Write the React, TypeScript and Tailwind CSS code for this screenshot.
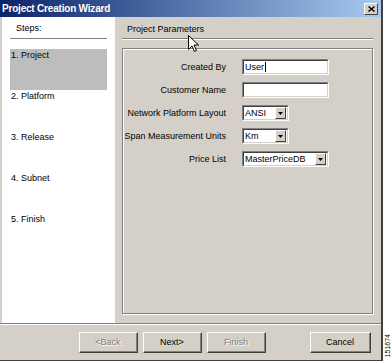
import React from "react";

const font = { fontFamily: '"Liberation Sans", Arial, sans-serif' };

function Field({ value, width, caret }: { value: string; width: string; caret?: boolean }) {
  return (
    <div
      className={`${width} h-[16px] bg-white border-t border-l border-t-[#808080] border-l-[#808080] border-b border-r border-b-white border-r-white`}
    >
      <div className="h-full border-t border-l border-t-[#404040] border-l-[#404040] border-b border-r border-b-[#d4d0c8] border-r-[#d4d0c8] flex items-center pl-[1px] text-[9px] text-black leading-none">
        {value}
        {caret && <span className="ml-[1px] w-px h-[10px] bg-black" />}
      </div>
    </div>
  );
}

function Select({ value, width }: { value: string; width: string }) {
  return (
    <div
      className={`${width} h-[16px] bg-white border-t border-l border-t-[#808080] border-l-[#808080] border-b border-r border-b-white border-r-white`}
    >
      <div className="h-full border-t border-l border-t-[#404040] border-l-[#404040] border-b border-r border-b-[#d4d0c8] border-r-[#d4d0c8] flex items-center pl-[1px] text-[9px] text-black leading-none">
        <span className="flex-1">{value}</span>
        <div className="w-[11px] h-[12px] mr-[1px] bg-[#d4d0c8] border-t border-l border-t-white border-l-white border-b border-r border-b-[#404040] border-r-[#404040] flex items-center justify-center">
          <svg width="5" height="3" viewBox="0 0 5 3">
            <path d="M0 0h5L2.5 3z" fill="#000" />
          </svg>
        </div>
      </div>
    </div>
  );
}

function Btn({ label, disabled, className = "" }: { label: string; disabled?: boolean; className?: string }) {
  return (
    <div
      className={`w-[59px] h-[21px] bg-[#d4d0c8] border-t border-l border-t-white border-l-white border-b border-r border-b-[#404040] border-r-[#404040] ${className}`}
    >
      <div className="h-full border-b border-r border-b-[#808080] border-r-[#808080] flex items-center justify-center text-[9px] leading-none">
        {disabled ? (
          <span className="text-[#808080] [text-shadow:1px_1px_0_#fff]">{label}</span>
        ) : (
          <span className="text-black">{label}</span>
        )}
      </div>
    </div>
  );
}

function Etched({ className = "" }: { className?: string }) {
  return <div className={`h-[2px] border-t border-t-[#808080] border-b border-b-white ${className}`} />;
}

export default function App() {
  const steps = ["1. Project", "2. Platform", "3. Release", "4. Subnet", "5. Finish"];
  const rows: { label: string; el: React.ReactNode }[] = [
    { label: "Created By", el: <Field value="User" width="w-[87px]" caret /> },
    { label: "Customer Name", el: <Field value="" width="w-[87px]" /> },
    { label: "Network Platform Layout", el: <Select value="ANSI" width="w-[47px]" /> },
    { label: "Span Measurement Units", el: <Select value="Km" width="w-[47px]" /> },
    { label: "Price List", el: <Select value="MasterPriceDB" width="w-[87px]" /> },
  ];

  return (
    <div className="w-[392px] h-[363px] bg-white flex relative overflow-hidden" style={font}>
      {/* Fenster */}
      <div className="w-[383px] h-[361px] bg-[#d4d0c8] flex flex-col border-r-2 border-b border-r-[#404040] border-b-[#404040]">
        {/* Titelleiste */}
        <div className="h-[17px] flex items-center pl-[2px] pr-[3px] bg-[linear-gradient(to_right,#0a246a,#a6caf0)]">
          <span className="flex-1 text-white font-bold text-[10px] tracking-[-0.2px] leading-none">
            Project Creation Wizard
          </span>
          <div className="w-[14px] h-[12px] bg-[#d4d0c8] border-t border-l border-t-white border-l-white border-b border-r border-b-[#404040] border-r-[#404040] flex items-center justify-center">
            <svg width="7" height="6" viewBox="0 0 7 6">
              <path d="M0.5 0.5l6 5M6.5 0.5l-6 5" stroke="#000" strokeWidth="1.4" />
            </svg>
          </div>
        </div>

        {/* Inhalt */}
        <div className="flex h-[306px]">
          {/* Schritte */}
          <div className="w-[113px] ml-[2px] bg-white flex flex-col">
            <div className="pt-[5px] pl-[14px] h-[18px] text-[9px] text-black leading-[13px]">Steps:</div>
            <Etched className="mx-[8px] mt-[3px]" />
            <div className="flex flex-col mt-[9px] mx-[8px]">
              {steps.map((s, i) => (
                <div
                  key={s}
                  className={`h-[41px] text-[9px] text-black leading-[13px] pl-[1px] ${i === 0 ? "bg-[#bdbdbd]" : ""}`}
                >
                  {s}
                </div>
              ))}
            </div>
          </div>

          {/* Parameter */}
          <div className="flex-1 flex flex-col pl-[7px] pr-[8px]">
            <div className="pt-[6px] pl-[5px] h-[19px] text-[9px] text-black leading-[13px]">Project Parameters</div>
            <Etched className="mt-[2px]" />
            <div className="mt-[8px] h-[266px] border border-[#808080] shadow-[inset_1px_1px_0_#fff,1px_1px_0_#fff] pt-[10px] flex flex-col gap-[7px]">
              {rows.map((r) => (
                <div key={r.label} className="flex items-center h-[16px]">
                  <div className="w-[103px] text-right text-[9px] text-black leading-none whitespace-nowrap">{r.label}</div>
                  <div className="ml-[16px]">{r.el}</div>
                </div>
              ))}
            </div>
          </div>
        </div>

        {/* Knopfleiste */}
        <Etched />
        <div className="flex-1 flex items-start pt-[7px] pl-[79px]">
          <Btn label="<Back" disabled />
          <Btn label="Next>" className="ml-[5px]" />
          <Btn label="Finish" disabled className="ml-[5px]" />
          <Btn label="Cancel" className="ml-[44px] w-[61px]" />
        </div>
      </div>

      {/* Bildnummer */}
      <div className="flex-1 flex items-end justify-center pb-[6px]">
        <span className="[writing-mode:vertical-rl] rotate-180 text-[7px] text-black leading-none">151674</span>
      </div>

      {/* Mauszeiger */}
      <svg className="absolute left-[188px] top-[35px]" width="11" height="17" viewBox="0 0 11 17">
        <path d="M0.5 0.5v14l3.5-3.5 2.5 5.5 2-1-2.5-5.5h4.5z" fill="#fff" stroke="#000" strokeWidth="1" />
      </svg>
    </div>
  );
}
